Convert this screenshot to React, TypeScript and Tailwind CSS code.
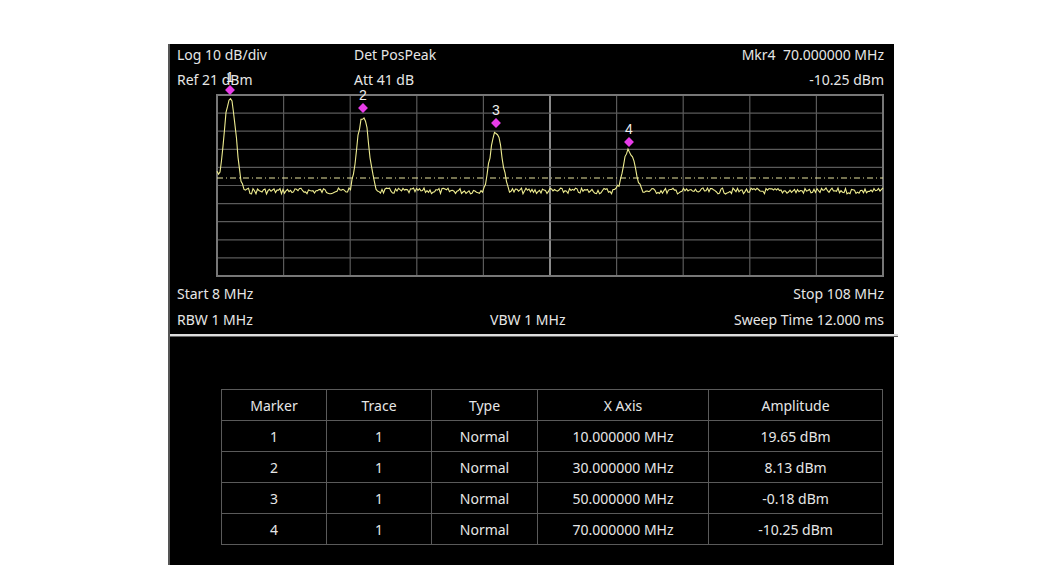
import React from "react"

const W = 666
const H = 181
const peaks = [
  { x: 13, top: 4, n: "1" },
  { x: 146, top: 22, n: "2" },
  { x: 279, top: 37, n: "3" },
  { x: 412, top: 56, n: "4" },
]

function buildTrace() {
  let seed = 7
  const rnd = () => {
    seed = (seed * 9301 + 49297) % 233280
    return seed / 233280
  }
  const pts: string[] = []
  for (let x = 0; x <= W; x += 1.5) {
    let y = 96 + (rnd() - 0.5) * 6
    if (x < 2) y = 80 + x * 5
    for (const p of peaks) {
      const d = x - p.x
      const g = Math.exp(-Math.pow(Math.abs(d) / 8, 2.4))
      y = y - g * (96 - p.top)
    }
    pts.push(`${x.toFixed(1)},${y.toFixed(1)}`)
  }
  return pts.join(" ")
}

const trace = buildTrace()

const rows = [
  ["1", "1", "Normal", "10.000000 MHz", "19.65 dBm"],
  ["2", "1", "Normal", "30.000000 MHz", "8.13 dBm"],
  ["3", "1", "Normal", "50.000000 MHz", "-0.18 dBm"],
  ["4", "1", "Normal", "70.000000 MHz", "-10.25 dBm"],
]
const widths = ["w-[105px]", "w-[105px]", "w-[106px]", "w-[171px]", "w-[174px]"]

export default function App() {
  return (
    <div className="w-[1064px] h-[565px] bg-white pt-[44px] pl-[168px] [font-family:'Liberation_Sans',Arial,sans-serif] text-[14px] text-[#e6e6e6] overflow-hidden">
      <div className="w-[726px] bg-black border-l-2 border-[#555]">
        <div className="h-[290px] flex flex-col pl-[7px] pr-[10px]">
          <div className="h-[21px] flex items-center">
            <span className="w-[177px]">Log 10 dB/div</span>
            <span className="flex-1">Det PosPeak</span>
            <span>Mkr4&nbsp; 70.000000 MHz</span>
          </div>
          <div className="h-[30px] flex items-center pb-[2px]">
            <span className="w-[177px]">Ref 21 dBm</span>
            <span className="flex-1">Att 41 dB</span>
            <span>-10.25 dBm</span>
          </div>
          <div className="ml-[40px] h-[181px]">
            <svg width={W} height={H} className="overflow-visible block">
              {Array.from({ length: 11 }).map((_, i) => (
                <line key={"v" + i} x1={i * 66.6} x2={i * 66.6} y1={0} y2={H} stroke={i === 5 ? "#8a8a8a" : "#5a5a5a"} strokeWidth={i === 5 ? 2 : 1.2} />
              ))}
              {Array.from({ length: 11 }).map((_, i) => (
                <line key={"h" + i} x1={0} x2={W} y1={i * 18.1} y2={i * 18.1} stroke="#5a5a5a" strokeWidth={1.2} />
              ))}
              <rect x={0} y={0} width={W} height={H} fill="none" stroke="#777" strokeWidth={2} />
              <line x1={0} x2={W} y1={83} y2={83} stroke="#e8e4a0" strokeWidth={1} strokeDasharray="6 3 1 3" />
              <polyline points={trace} fill="none" stroke="#eeec90" strokeWidth={1.1} />
              {peaks.map((p) => (
                <g key={p.n}>
                  <rect x={p.x - 3.5} y={p.top - 12.5} width={7} height={7} fill="#e83ce8" transform={`rotate(45 ${p.x} ${p.top - 9})`} />
                  <text x={p.x} y={p.top - 17} fill="#eee" fontSize={14} textAnchor="middle" fontFamily="Liberation Sans, Arial, sans-serif">{p.n}</text>
                </g>
              ))}
            </svg>
          </div>
          <div className="h-[30px] flex items-end justify-between pb-[2px]">
            <span>Start 8 MHz</span>
            <span>Stop 108 MHz</span>
          </div>
          <div className="h-[26px] flex items-center">
            <span className="w-[313px]">RBW 1 MHz</span>
            <span className="flex-1">VBW 1 MHz</span>
            <span>Sweep Time 12.000 ms</span>
          </div>
        </div>
        <div className="h-[3px] bg-[#ddd] border-b border-[#666] w-[728px]" />
        <div className="h-[230px] pt-[52px] pl-[51px]">
          <table className="border-collapse text-[14px] text-[#e6e6e6]">
            <thead>
              <tr className="h-[31px]">
                {["Marker", "Trace", "Type", "X Axis", "Amplitude"].map((h, i) => (
                  <th key={h} className={`${widths[i]} border border-[#5a5a5a] font-normal text-center p-0`}>{h}</th>
                ))}
              </tr>
            </thead>
            <tbody>
              {rows.map((r) => (
                <tr key={r[0]} className="h-[31px]">
                  {r.map((c, i) => (
                    <td key={i} className={`${widths[i]} border border-[#5a5a5a] text-center p-0`}>{c}</td>
                  ))}
                </tr>
              ))}
            </tbody>
          </table>
        </div>
      </div>
    </div>
  )
}
